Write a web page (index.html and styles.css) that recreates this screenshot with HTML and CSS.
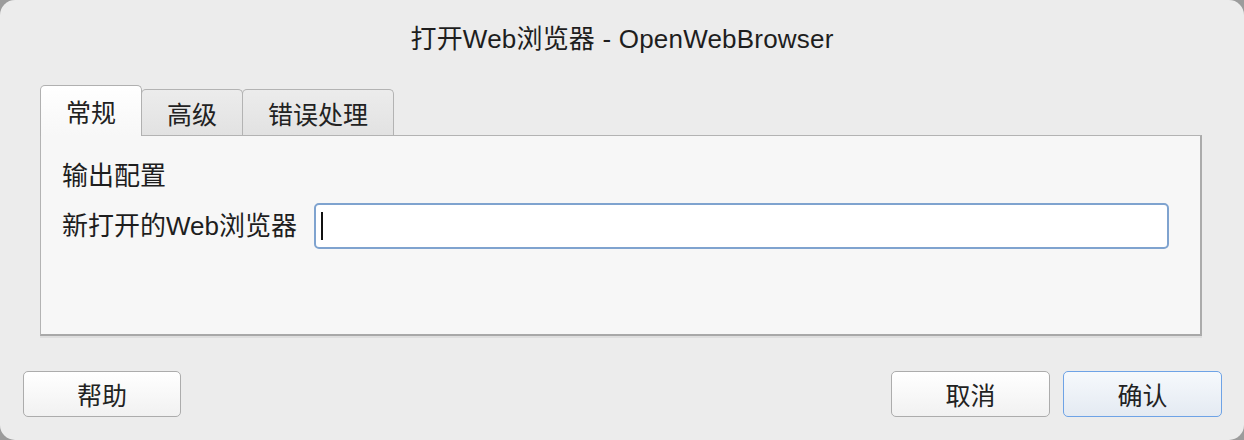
FILE: index.html
```html
<!DOCTYPE html>
<html lang="zh-CN">
<head>
<meta charset="utf-8">
<title>打开Web浏览器 - OpenWebBrowser</title>
<link rel="stylesheet" href="styles.css">
</head>
<body>
<div class="window">
  <div class="title">打开Web浏览器 - OpenWebBrowser</div>
  <div class="tabs">
    <div class="tab active">常规</div>
    <div class="tab">高级</div>
    <div class="tab">错误处理</div>
  </div>
  <div class="panel">
    <div class="section">输出配置</div>
    <div class="row">
      <label class="label">新打开的Web浏览器</label>
      <div class="field"><span class="caret"></span></div>
    </div>
  </div>
  <div class="footer">
    <button class="btn help">帮助</button>
    <div class="spacer"></div>
    <button class="btn">取消</button>
    <button class="btn primary">确认</button>
  </div>
</div>
</body>
</html>
```

FILE: styles.css
```css
html, body {
  margin: 0;
  padding: 0;
  background: #9c9c9c;
}
body {
  font-family: "Liberation Sans", "Noto Sans CJK SC", sans-serif;
  color: #1e1e1e;
}
.window {
  width: 1244px;
  height: 440px;
  background: #ececec;
  border-radius: 15px;
  display: flex;
  flex-direction: column;
  box-sizing: border-box;
  overflow: hidden;
}
.title {
  height: 85px;
  padding-top: 21px;
  box-sizing: border-box;
  text-align: center;
  font-size: 26px;
  line-height: 36px;
  letter-spacing: 0.2px;
}
.tabs {
  display: flex;
  align-items: flex-end;
  height: 50px;
  margin-left: 40px;
  position: relative;
  z-index: 1;
}
.tab {
  height: 46px;
  box-sizing: border-box;
  padding: 0 25px;
  font-family: "Noto Sans CJK SC", sans-serif;
  font-size: 25px;
  line-height: 46px;
  background: linear-gradient(#ececec, #e2e2e2);
  border: 1px solid #b3b3b3;
  border-bottom: none;
  border-radius: 5px 5px 0 0;
  color: #222;
}
.tab + .tab {
  margin-left: -1px;
}
.tab.active {
  height: 51px;
  margin-bottom: -1px;
  line-height: 50px;
  background: linear-gradient(#ffffff, #f7f7f7);
  border-color: #b0b0b0;
  z-index: 2;
}
.panel {
  margin: 0 42px 0 40px;
  height: 201px;
  box-sizing: border-box;
  background: #f7f7f7;
  border-top: 1px solid #b3b3b3;
  border-left: 1px solid #b3b3b3;
  border-right: 2px solid #ababab;
  border-bottom: 2px solid #a8a8a8;
  box-shadow: 0 2px 0 #dedede;
  padding: 22px 31px 0 21px;
}
.section {
  font-size: 26px;
  line-height: 36px;
  height: 36px;
}
.row {
  display: grid;
  grid-template-columns: auto 1fr;
  align-items: center;
  column-gap: 17px;
  margin-top: 9px;
}
.label {
  font-size: 26px;
  line-height: 36px;
}
.field {
  height: 46px;
  box-sizing: border-box;
  background: #ffffff;
  border: 2px solid #7fa3cf;
  border-radius: 5px;
  display: flex;
  align-items: center;
  padding-left: 5px;
}
.caret {
  width: 2px;
  height: 28px;
  background: #111;
}
.footer {
  display: flex;
  align-items: center;
  margin-top: 35px;
  padding: 0 22px 0 23px;
  gap: 13px;
}
.spacer {
  flex: 1;
}
.btn {
  width: 159px;
  height: 46px;
  box-sizing: border-box;
  font-family: "Noto Sans CJK SC", sans-serif;
  font-size: 25px;
  color: #222;
  background: linear-gradient(#ffffff, #f1f1f1);
  border: 1.5px solid #acacac;
  border-radius: 5px;
  padding: 0;
  line-height: 1;
}
.btn.help {
  width: 158px;
}
.btn.primary {
  background: linear-gradient(#f6f9fc, #e4eaf2);
  border-color: #6ea3e6;
}
```
